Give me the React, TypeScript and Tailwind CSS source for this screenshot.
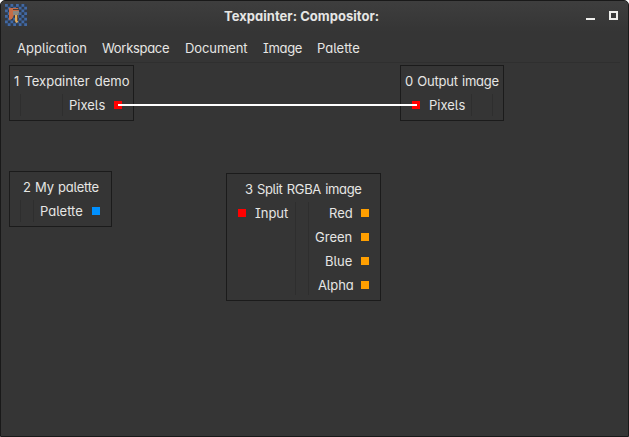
import type { ReactNode } from 'react';

function Label({ children, className = '' }: { children: ReactNode; className?: string }) {
  return <span className={`block h-6 shrink-0 whitespace-nowrap leading-6 ${className}`}>{children}</span>;
}

function Port({ color }: { color: string }) {
  return <span className={`block size-2 shrink-0 ${color}`} />;
}

function Divider({ className = 'h-[22px]' }: { className?: string }) {
  return <span className={`block w-px shrink-0 bg-[#2e2e2e] ${className}`} />;
}

function Node({ title, titleClass, className, children }: { title: string; titleClass: string; className: string; children: ReactNode }) {
  return (
    <section className={`absolute border border-[#1b1b1b] pt-[3px] ${className}`}>
      <Label className={titleClass}>{title}</Label>
      {children}
    </section>
  );
}

function AppIcon() {
  return (
    <svg width="22" height="22" viewBox="0 0 22 22">
      <defs>
        <pattern id="checker" width="5.5" height="5.5" patternUnits="userSpaceOnUse">
          <rect width="5.5" height="5.5" fill="#303a49" />
          <path d="M0 0h2.75v2.75H0zM2.75 2.75H5.5V5.5H2.75z" fill="#4169a5" />
        </pattern>
      </defs>
      <rect width="22" height="22" fill="url(#checker)" />
      <path d="M4 4h9l1 3-2 5-3-1-2 4-3 1z" fill="#c66c46" />
      <path d="M8 7h6v4H8z" fill="#777571" />
      <path d="M8 8h6M8 10h5" stroke="#a19c91" />
      <path d="M8 5.5h6" stroke="#453c36" />
      <path d="M10 11h2l1 7-2 1-1-2z" fill="#dfab5b" />
      <path d="M12.5 11v6" stroke="#75502f" />
    </svg>
  );
}

const outputs = [
  { name: 'Red', style: 'w-[23px]' },
  { name: 'Green', style: 'w-[37px]' },
  { name: 'Blue', style: 'w-[27px]' },
  { name: 'Alpha', style: 'w-[34px] tracking-[-0.1px]' },
];

export default function App() {
  return (
    <div className="h-[437px] w-[629px] bg-white">
      <main className="relative flex h-full flex-col overflow-hidden rounded-t-[5px] border border-[#191919] bg-[#353535] font-['Inter','Noto_Sans',sans-serif] text-[13px] text-[#e6e6e4] [font-feature-settings:'ss04','cv05','cv08','cv11']">
        <header className="flex h-[31px] shrink-0 items-start bg-linear-to-b from-[#3e3e3e] to-[#353535] pl-1 pt-[3px]">
          <AppIcon />
          <h1 className="ml-[197px] w-[156px] whitespace-nowrap text-[13px] font-bold leading-6 tracking-[0.03px]">Texpainter: Compositor:</h1>
          <div className="ml-[206px] mt-[7px] flex h-[9px] items-end gap-3.5">
            <span className="h-0.5 w-[9px] bg-[#eeeeec]" />
            <span className="size-[9px] border-2 border-[#eeeeec]" />
          </div>
        </header>
        <nav className="mx-2 flex h-[31px] shrink-0 gap-4 border-b border-[#2f2f2f] pl-2 pt-1">
          <Label className="w-[69px]">Application</Label>
          <Label className="w-[67px] tracking-[-0.3px]">Workspace</Label>
          <Label className="w-[62px] tracking-[-0.1px]">Document</Label>
          <Label className="w-[38px] tracking-[-0.3px]">Image</Label>
          <Label className="w-[43px]">Palette</Label>
        </nav>

        <Node title="1 Texpainter demo" titleClass="ml-1 [word-spacing:1.5px]" className="left-2 top-16 h-14 w-[125px]">
          <div className="flex items-center pl-2.5">
            <Divider />
            <Divider className="ml-[41px] h-[22px]" />
            <Label className="ml-1.5 w-9">Pixels</Label>
            <span className="ml-[9px]"><Port color="bg-[#ff0000]" /></span>
          </div>
        </Node>
        <Node title="0 Output image" titleClass="ml-1 tracking-[-0.25px] [word-spacing:1px]" className="left-[399px] top-16 h-14 w-[104px]">
          <div className="flex items-center pl-[11px]">
            <Port color="bg-[#ff0000]" />
            <Label className="ml-[9px] w-9">Pixels</Label>
            <Divider className="ml-1.5 h-[22px]" />
            <Divider className="ml-5 h-[22px]" />
          </div>
        </Node>
        <Node title="2 My palette" titleClass="ml-[13px] tracking-[-0.25px] [word-spacing:1px]" className="left-2 top-[170px] h-14 w-[103px]">
          <div className="flex items-center pl-2.5">
            <Divider />
            <Divider className="ml-3 h-[22px]" />
            <Label className="ml-1.5 w-[43px]">Palette</Label>
            <span className="ml-[9px]"><Port color="bg-[#0090ff]" /></span>
          </div>
        </Node>
        <Node title="3 Split RGBA image" titleClass="ml-[18px] tracking-[-0.35px] [word-spacing:1px]" className="left-[225px] top-[172px] h-32 w-[155px]">
          <div className="flex items-start">
            <div className="ml-[11px] flex items-center">
              <Port color="bg-[#ff0000]" />
              <Label className="ml-[9px] w-[34px]">Input</Label>
            </div>
            <Divider className="ml-1.5 mt-px h-[93px]" />
            <Divider className="ml-3 mt-px h-[93px]" />
            <div className="ml-1.5 w-[54px]">
              {outputs.map(({ name, style }) => (
                <div key={name} className="flex items-center justify-end gap-[9px]">
                  <Label className={style}>{name}</Label>
                  <Port color="bg-[#ff9f00]" />
                </div>
              ))}
            </div>
          </div>
        </Node>
        <span className="absolute left-[117px] top-[103px] h-0.5 w-[299px] bg-white" />
      </main>
    </div>
  );
}
